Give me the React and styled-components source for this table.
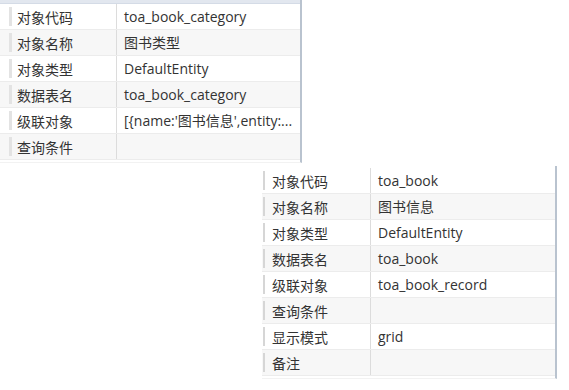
import React from 'react'
import styled, { createGlobalStyle } from 'styled-components'

const GlobalStyle = createGlobalStyle`
  html, body {
    margin: 0;
    padding: 0;
    background: #fff;
  }
  body {
    font-family: "Open Sans", "Noto Sans CJK SC", sans-serif;
    font-size: 14px;
    color: #333;
  }
`

const categoryProps = [
  ['对象代码', 'toa_book_category'],
  ['对象名称', '图书类型'],
  ['对象类型', 'DefaultEntity'],
  ['数据表名', 'toa_book_category'],
  ['级联对象', "[{name:'图书信息',entity:..."],
  ['查询条件', ''],
]

const bookProps = [
  ['对象代码', 'toa_book'],
  ['对象名称', '图书信息'],
  ['对象类型', 'DefaultEntity'],
  ['数据表名', 'toa_book'],
  ['级联对象', 'toa_book_record'],
  ['查询条件', ''],
  ['显示模式', 'grid'],
  ['备注', ''],
]

export default function App() {
  return (
    <Page>
      <GlobalStyle />
      <Grid width={302} labelWidth={117} headed>
        <TopBar />
        {categoryProps.map(([k, v], i) => (
          <Row key={i} odd={i % 2 === 1}>
            <Label grip="wide">{k}</Label>
            <Value>{v}</Value>
          </Row>
        ))}
      </Grid>
      <Grid width={295} labelWidth={109} offset={262}>
        {bookProps.map(([k, v], i) => (
          <Row key={i} odd={i % 2 === 1}>
            <Label>{k}</Label>
            <Value>{v}</Value>
          </Row>
        ))}
      </Grid>
    </Page>
  )
}

const Page = styled.div`
  display: flex;
  flex-direction: column;
  gap: 3px;
  width: 569px;
  height: 390px;
`

const Grid = styled.div`
  --label-w: ${p => p.labelWidth}px;
  width: ${p => p.width}px;
  margin-left: ${p => p.offset || 0}px;
  padding-top: ${p => (p.headed ? 0 : 2)}px;
  padding-bottom: 2px;
  border-right: 2px solid #b9c3cf;
  border-bottom: 1px solid #f2f2f2;
  box-sizing: border-box;
  display: flex;
  flex-direction: column;
`

const TopBar = styled.div`
  height: 4px;
  background: #e2e7ef;
  border-bottom: 1px solid #d4dbe6;
  box-sizing: border-box;
`

const Row = styled.div`
  display: grid;
  grid-template-columns: var(--label-w) 1fr;
  height: 26px;
  box-sizing: border-box;
  border-bottom: 1px solid #ececec;
  background: ${p => (p.odd ? '#f7f7f7' : '#fff')};
`

const Label = styled.div`
  position: relative;
  display: flex;
  align-items: center;
  padding-left: ${p => (p.grip === 'wide' ? 17 : 10)}px;
  border-right: 1px solid #dcdcdc;
  white-space: nowrap;

  &::before {
    content: '';
    position: absolute;
    left: ${p => (p.grip === 'wide' ? 9 : 1)}px;
    top: 3px;
    bottom: 3px;
    width: ${p => (p.grip === 'wide' ? 3 : 2)}px;
    background: ${p => (p.grip === 'wide' ? '#e3e3e3' : '#d6d6d6')};
  }
`

const Value = styled.div`
  display: block;
  line-height: 25px;
  padding: 0 4px 0 7px;
  min-width: 0;
  overflow: hidden;
  white-space: nowrap;
  text-overflow: ellipsis;
`
